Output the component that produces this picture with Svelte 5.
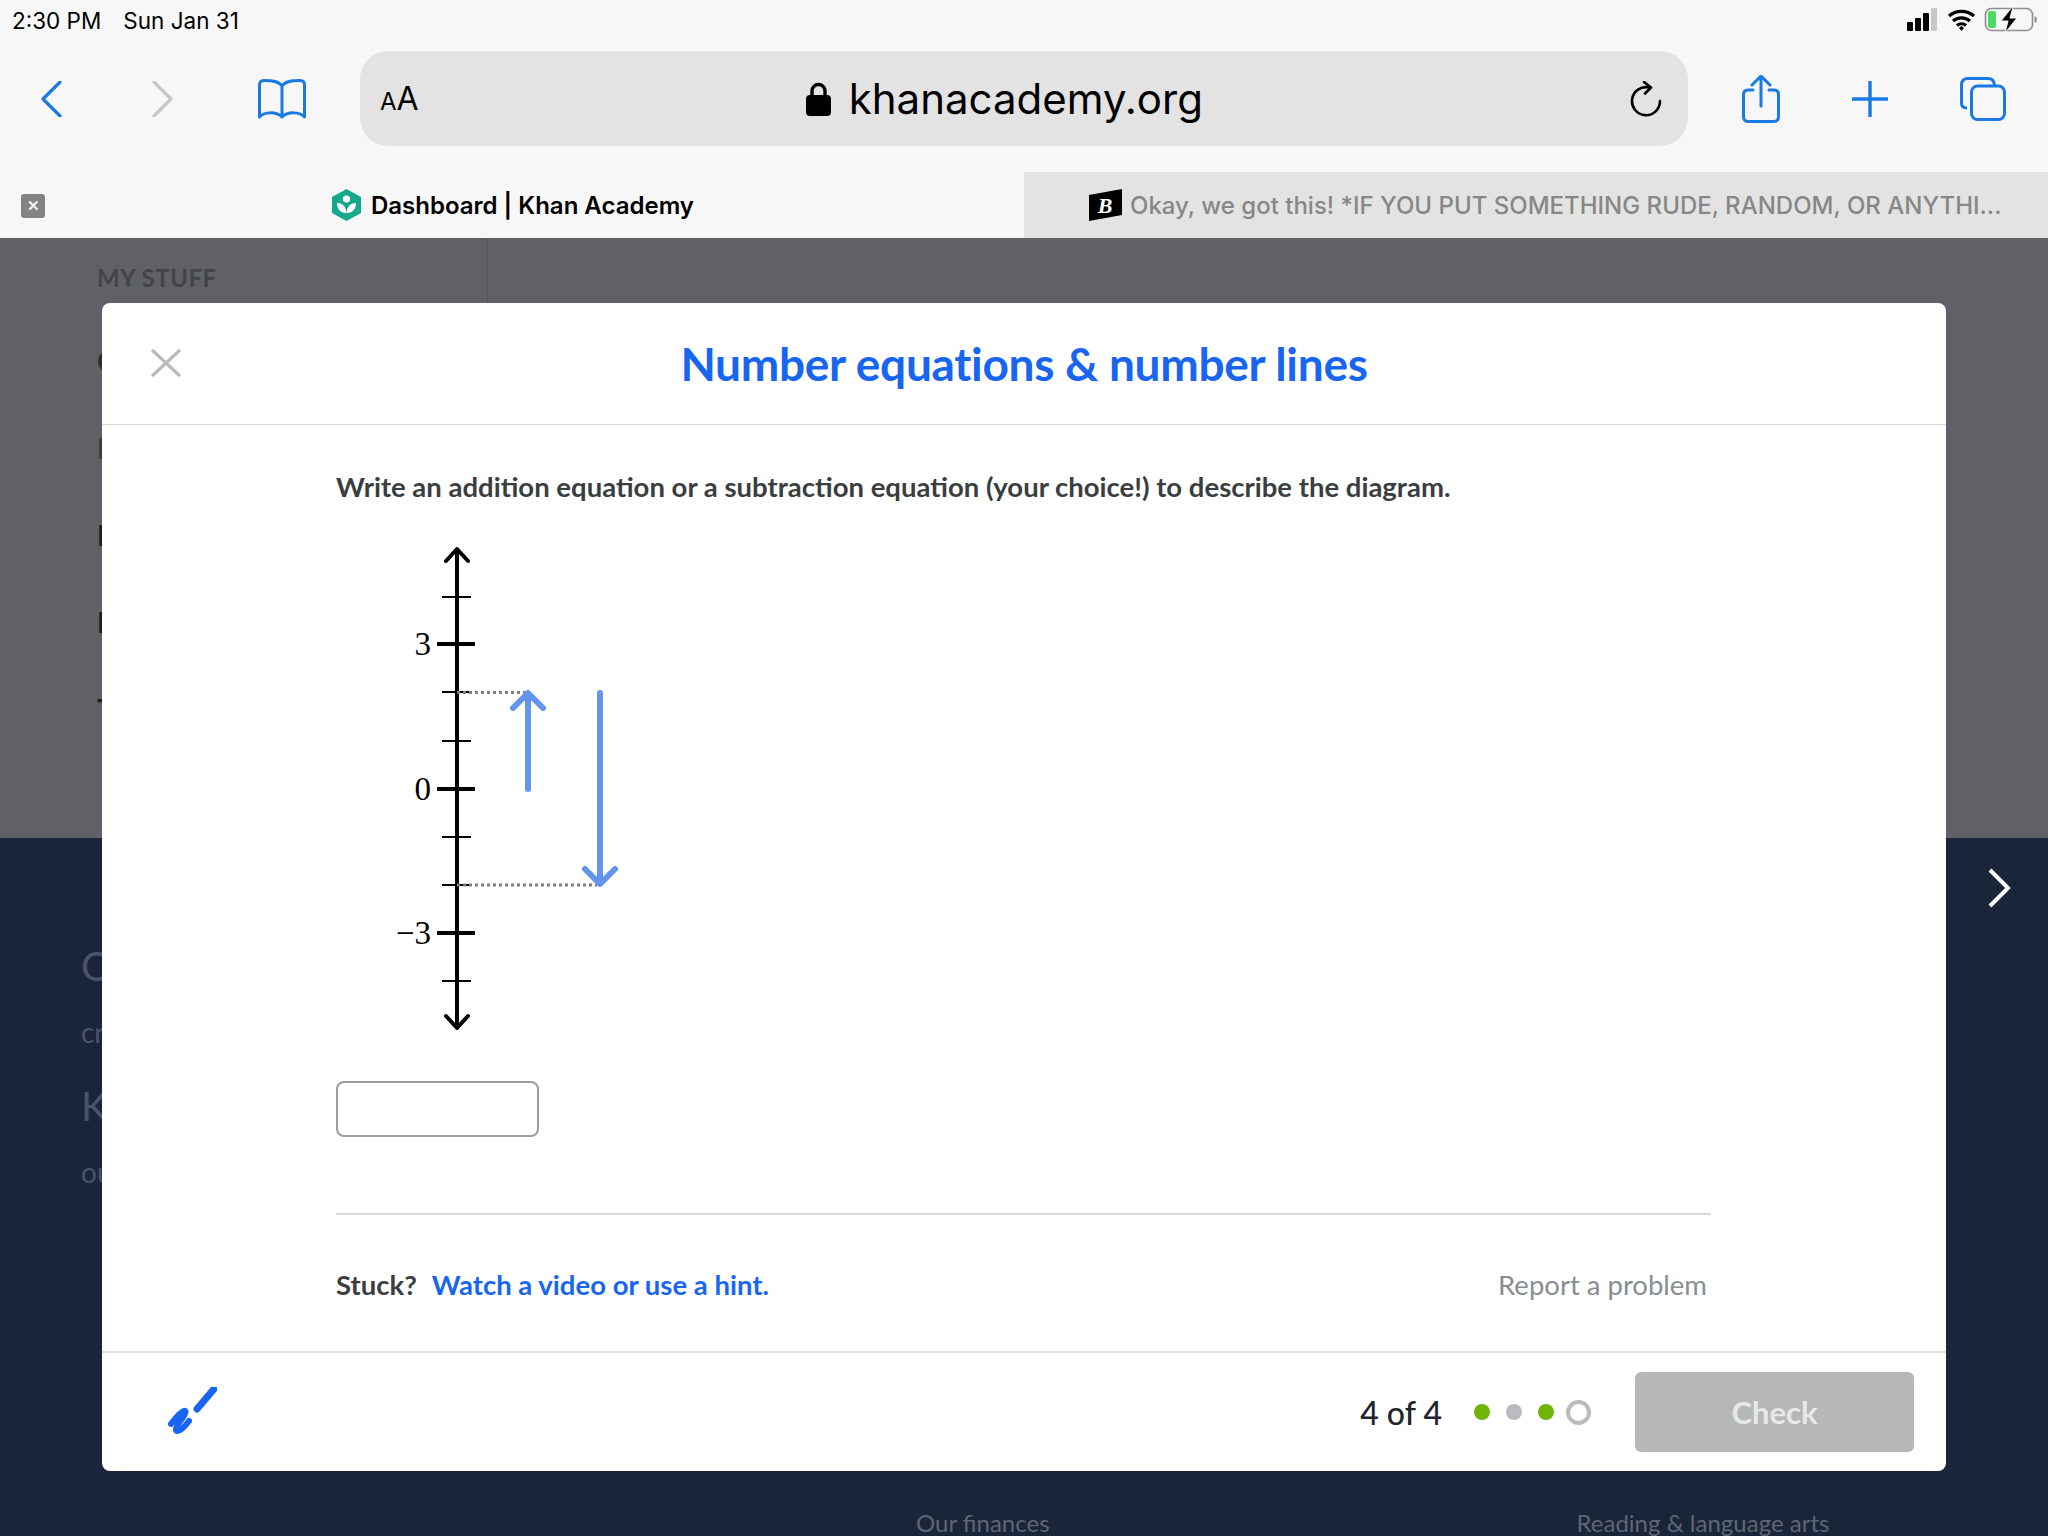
<script>
  const majorTicks = [
    { y: 644, label: "3" },
    { y: 789, label: "0" },
    { y: 933, label: "−3" }
  ];
  const minorTicks = [597, 692, 741, 837, 885, 981];
  const dots = ["done", "skipped", "done", "current"];
</script>

<div class="page">
  <header class="chrome">
    <div class="status">
      <span class="clock">2:30 PM</span>
      <span class="date">Sun Jan 31</span>
      <svg class="status-icons" width="132" height="26" viewBox="0 0 132 26">
        <rect x="0" y="15" width="6" height="9" rx="1" fill="#000" />
        <rect x="8" y="11" width="6" height="13" rx="1" fill="#000" />
        <rect x="16" y="6" width="6" height="18" rx="1" fill="#000" />
        <rect x="24" y="1" width="6" height="23" rx="1" fill="#c8c8c8" />
        <path d="M42 9a19 19 0 0 1 25 0M46 14a13 13 0 0 1 17 0M50 18.500a7 7 0 0 1 9 0" fill="none" stroke="#000" stroke-width="3.200" />
        <path d="M52 21l2.500-2 2.500 2-2.500 3z" fill="#000" />
        <rect x="78.500" y="1.500" width="47" height="22" rx="6" fill="none" stroke="#8e8e8e" stroke-width="1.600" />
        <rect x="81" y="4" width="8" height="17" rx="2.500" fill="#4cd964" />
        <path d="M127.500 9v7q2.500-1 2.500-3.500t-2.500-3.500z" fill="#8e8e8e" />
        <path d="M105 0l-11 14h7l-3 12 12-15h-7l3-11z" fill="#000" stroke="#f7f7f7" stroke-width="1" />
      </svg>
    </div>

    <div class="toolbar">
      <div class="nav-icons">
        <svg width="21" height="36" viewBox="0 0 21 36"><path d="M19 1L2 18l17 17" fill="none" stroke="#1a7ae4" stroke-width="3.200" stroke-linecap="round" stroke-linejoin="round" /></svg>
        <svg class="forward" width="21" height="36" viewBox="0 0 21 36"><path d="M2 1l17 17L2 35" fill="none" stroke="#c6c6c8" stroke-width="3.200" stroke-linecap="round" stroke-linejoin="round" /></svg>
        <svg class="book" width="48" height="40" viewBox="0 0 48 40"><path d="M24 7C21 2 14 1.500 6 1.500 3 1.500 1.500 3 1.500 6v32C6 33 18 32 24 38c6-6 18-5 22.500 0V6c0-3-1.500-4.500-4.500-4.500C34 1.500 27 2 24 7zM24 7v31" fill="none" stroke="#1a7ae4" stroke-width="3" stroke-linejoin="round" /></svg>
      </div>

      <div class="urlbar">
        <span class="aa"><small>A</small>A</span>
        <div class="address">
          <svg width="25" height="34" viewBox="0 0 25 34"><path d="M6 15V9a6.500 6.500 0 0 1 13 0v6" fill="none" stroke="#000" stroke-width="3.400" /><rect x="0" y="13" width="25" height="21" rx="4" fill="#000" /></svg>
          <span>khanacademy.org</span>
        </div>
        <svg width="32" height="36" viewBox="0 0 32 36"><path d="M19 6.500A14 14 0 1 0 30 20" fill="none" stroke="#000" stroke-width="2.600" stroke-linecap="round" /><path d="M14 1l7 5.500-6 6" fill="none" stroke="#000" stroke-width="2.600" stroke-linecap="round" stroke-linejoin="round" /></svg>
      </div>

      <div class="action-icons">
        <svg width="38" height="48" viewBox="0 0 38 48"><path d="M11 15H6q-4.500 0-4.500 4.500v22Q1.500 46.500 6 46.500h26q4.500 0 4.500-5v-22q0-4.500-4.500-4.500h-5M19 31V2M10 10l9-9 9 9" fill="none" stroke="#1a7ae4" stroke-width="3" stroke-linecap="round" stroke-linejoin="round" /></svg>
        <svg width="36" height="36" viewBox="0 0 36 36"><path d="M18 1v34M1 18h34" fill="none" stroke="#1a7ae4" stroke-width="3.400" stroke-linecap="round" /></svg>
        <svg width="46" height="44" viewBox="0 0 46 44"><path d="M7 31Q1.500 31 1.500 26V8q0-6.500 6.500-6.500h20q6 0 6.500 6.500" fill="none" stroke="#1a7ae4" stroke-width="3" /><rect x="11.500" y="9" width="33" height="33.500" rx="6" fill="none" stroke="#1a7ae4" stroke-width="3" /></svg>
      </div>
    </div>

    <div class="tabs">
      <div class="tab active">
        <span class="tab-close">✕</span>
        <svg width="29" height="32" viewBox="0 0 29 32">
          <path d="M14.500 0L29 8v16l-14.500 8L0 24V8z" fill="#14a98c" />
          <circle cx="14.500" cy="10" r="3.600" fill="#fff" />
          <path d="M5 14c5 0 9 3 9.500 10-5 0-9.500-3-9.500-10zM24 14c-5 0-9 3-9.500 10 5 0 9.500-3 9.500-10z" fill="#fff" />
        </svg>
        <span>Dashboard | Khan Academy</span>
      </div>
      <div class="tab inactive">
        <svg width="33" height="32" viewBox="0 0 33 32">
          <path d="M0 6L33 0v26L0 32z" fill="#000" />
          <text x="16" y="24" class="boldly-b">B</text>
        </svg>
        <span>Okay, we got this! *IF YOU PUT SOMETHING RUDE, RANDOM, OR ANYTHI...</span>
      </div>
    </div>
  </header>

  <section class="dimmed">
    <aside class="sidebar">
      <h4>MY STUFF</h4>
      <p>Courses</p>
      <p class="sub">Mastery</p>
      <p>Progress</p>
      <p>Profile</p>
      <p>Teachers</p>
    </aside>
    <svg class="next" width="24" height="40" viewBox="0 0 24 40"><path d="M3 2l18 18L3 38" fill="none" stroke="#fff" stroke-width="4" /></svg>
  </section>

  <footer class="navy">
    <div class="navy-intro">
      <p class="big">Our mission</p>
      <p class="small">create</p>
      <p class="big second">Khan</p>
      <p class="small">our</p>
    </div>
    <div class="navy-links">
      <span class="finances">Our finances</span>
      <span class="reading">Reading &amp; language arts</span>
    </div>
  </footer>

  <div class="modal">
    <div class="modal-head">
      <svg class="close" width="30" height="30" viewBox="0 0 30 30"><path d="M1 2l28 26M29 2L1 28" fill="none" stroke="#b9babc" stroke-width="3.200" /></svg>
      <h1>Number equations &amp; number lines</h1>
    </div>

    <div class="modal-body">
      <p class="question">Write an addition equation or a subtraction equation (your choice!) to describe the diagram.</p>

      <svg class="diagram" width="304" height="520" viewBox="336 530 304 520">
        {#each minorTicks as y}
          <line x1="442" x2="471" y1={y} y2={y} stroke="#000" stroke-width="2" />
        {/each}
        {#each majorTicks as t}
          <line x1="437" x2="475" y1={t.y} y2={t.y} stroke="#000" stroke-width="4" />
          <text x="431" y={t.y + 11} text-anchor="end" class="tick-label">{t.label}</text>
        {/each}
        <line x1="457" x2="457" y1="550" y2="1027" stroke="#000" stroke-width="4" />
        <path d="M446 561l11-12 11 12M446 1016l11 12 11-12" fill="none" stroke="#000" stroke-width="4" stroke-linecap="round" stroke-linejoin="round" />
        <line x1="457" x2="526" y1="692.500" y2="692.500" stroke="#808080" stroke-width="3" stroke-dasharray="3 3" />
        <line x1="457" x2="597" y1="885" y2="885" stroke="#808080" stroke-width="3" stroke-dasharray="3 3" />
        <path d="M528 789V694M513 708l15-15 15 15" fill="none" stroke="#6495ed" stroke-width="6" stroke-linejoin="round" stroke-linecap="round" />
        <path d="M600 693V882M585 869l15 15 15-15" fill="none" stroke="#6495ed" stroke-width="6" stroke-linejoin="round" stroke-linecap="round" />
      </svg>

      <input class="answer" type="text" aria-label="answer" />
      <hr />

      <div class="help">
        <span><b>Stuck?</b><a href="#hint">Watch a video or use a hint.</a></span>
        <span class="report">Report a problem</span>
      </div>
    </div>

    <div class="modal-foot">
      <svg class="scratch" width="50" height="50" viewBox="0 0 50 50">
        <path d="M4 37c4-5 9-12 13-13 3-1 1 4-2 8-4 5-8 11-5 12 3 1 9-6 12-10" fill="none" stroke="#1865f2" stroke-width="6" stroke-linecap="round" stroke-linejoin="round" />
        <path d="M30 22L47 2" fill="none" stroke="#1865f2" stroke-width="7" stroke-linecap="round" />
      </svg>
      <div class="progress">
        <span class="count">4 of 4</span>
        <div class="dots">
          {#each dots as d}
            <span class="dot {d}"></span>
          {/each}
        </div>
        <button class="check" disabled>Check</button>
      </div>
    </div>
  </div>
</div>

<style>
  :global(body) {
    margin: 0;
    background: #606166;
  }

  .page {
    position: relative;
    width: 2048px;
    height: 1536px;
    overflow: hidden;
    font-family: "Lato", "Liberation Sans", sans-serif;
  }

  /* SAFARI CHROME */
  .chrome {
    height: 238px;
    background: #f7f7f7;
    font-family: "Inter", "Liberation Sans", sans-serif;
    display: flex;
    flex-direction: column;
  }

  .status {
    height: 40px;
    padding: 0 9px 0 12px;
    display: flex;
    align-items: center;
    font-size: 22.500px;
    color: #000;
  }

  .date {
    margin-left: 22px;
  }

  .status-icons {
    margin-left: auto;
  }

  .toolbar {
    height: 132px;
    display: flex;
    align-items: center;
    padding-left: 41px;
    padding-bottom: 15px;
    box-sizing: border-box;
  }

  .nav-icons {
    display: flex;
    align-items: center;
    width: 319px;
  }

  .forward {
    margin-left: 90px;
    opacity: 1;
  }

  .book {
    margin-left: 85px;
  }

  .urlbar {
    width: 1328px;
    height: 95px;
    border-radius: 28px;
    background: #e3e3e4;
    display: flex;
    align-items: center;
    padding: 0 26px 0 20px;
    box-sizing: border-box;
    position: relative;
  }

  .aa {
    font-size: 32px;
    color: #000;
  }

  .aa small {
    font-size: 24px;
  }

  .address {
    flex: 1;
    display: flex;
    align-items: center;
    justify-content: center;
    gap: 18px;
    font-size: 42px;
    color: #000;
    padding-right: 40px;
  }

  .action-icons {
    display: flex;
    align-items: center;
    margin-left: 54px;
    gap: 72px;
  }

  .tabs {
    height: 66px;
    display: flex;
    font-size: 24px;
    font-weight: 600;
  }

  .tab {
    width: 1024px;
    display: flex;
    align-items: center;
    position: relative;
  }

  .active {
    color: #000;
    padding-left: 332px;
    box-sizing: border-box;
    gap: 10px;
  }

  .tab-close {
    position: absolute;
    left: 21px;
    top: 22px;
    width: 24px;
    height: 24px;
    background: #838383;
    border-radius: 3px;
    color: #f2f2f2;
    font-size: 15px;
    line-height: 24px;
    text-align: center;
  }

  .inactive {
    background: #e3e3e4;
    color: #878787;
    padding-left: 65px;
    box-sizing: border-box;
    gap: 8px;
    white-space: nowrap;
    font-size: 24px;
    font-weight: 500;
  }

  .boldly-b {
    fill: #fff;
    font-family: "Liberation Serif", serif;
    font-weight: 700;
    font-style: italic;
    font-size: 22px;
    text-anchor: middle;
  }

  /* DIMMED PAGE */
  .dimmed {
    height: 600px;
    background: #606166;
    position: relative;
    box-sizing: border-box;
  }

  .sidebar {
    width: 487px;
    height: 64px;
    box-sizing: content-box;
    padding: 0;
    border-right: 1px solid #54555a;
    position: relative;
  }

  .sidebar h4 {
    margin: 0;
    padding: 28px 0 0 97px;
    font-size: 24px;
    line-height: 24px;
    font-weight: 700;
    letter-spacing: 0.500px;
    color: #42444a;
  }

  .sidebar p {
    margin: 0;
    padding-left: 97px;
    font-size: 28px;
    line-height: 34px;
    height: 87px;
    color: #1c1d20;
    font-weight: 700;
  }

  .sidebar h4 + p {
    margin-top: 54px;
    color: #2c2d31;
  }

  .sidebar .sub {
    color: #3a3c42;
  }

  .next {
    position: absolute;
    left: 1987px;
    top: 630px;
    z-index: 1;
  }

  .navy {
    height: 698px;
    background: #1b2539;
    position: relative;
  }

  .navy-intro {
    padding: 104px 0 0 81px;
    color: #49536a;
  }

  .navy-intro p {
    margin: 0;
  }

  .navy-intro .big {
    font-size: 40px;
    line-height: 48px;
  }

  .navy-intro .small {
    font-size: 28px;
    line-height: 40px;
    margin-top: 22px;
  }

  .navy-intro .second {
    margin-top: 30px;
  }

  .navy-links {
    position: absolute;
    top: 670px;
    left: 916px;
    color: #5e6675;
    font-size: 24px;
    display: flex;
    gap: 527px;
  }

  /* MODAL */
  .modal {
    position: absolute;
    left: 102px;
    top: 303px;
    width: 1844px;
    height: 1168px;
    background: #fff;
    border-radius: 8px;
    display: flex;
    flex-direction: column;
    z-index: 2;
  }

  .modal-head {
    height: 121px;
    border-bottom: 1px solid #d6d8da;
    display: flex;
    align-items: center;
    justify-content: center;
    position: relative;
    box-sizing: content-box;
  }

  .close {
    position: absolute;
    left: 49px;
    top: 45px;
  }

  h1 {
    margin: 0;
    font-size: 46px;
    font-weight: 700;
    color: #1865f2;
    letter-spacing: -0.300px;
    padding-bottom: 0;
  }

  .modal-body {
    flex: 1;
    padding: 0 235px 0 234px;
    display: flex;
    flex-direction: column;
  }

  .question {
    margin: 44px 0 0;
    font-size: 27.500px;
    line-height: 36px;
    font-weight: 700;
    color: #3b3e40;
    white-space: nowrap;
  }

  .diagram {
    display: block;
    margin-top: 25px;
  }

  .answer {
    display: block;
    width: 203px;
    height: 56px;
    box-sizing: border-box;
    margin: 31px 0 0;
    border: 2px solid #9a9da0;
    border-radius: 8px;
    background: #fff;
    padding: 0;
    outline: none;
  }

  hr {
    width: 100%;
    margin: 76px 0 0;
    border: 0;
    border-top: 2px solid #d6d8da;
  }

  .help {
    display: flex;
    justify-content: space-between;
    align-items: center;
    margin-top: 52px;
    padding-right: 4px;
    font-size: 27.500px;
    line-height: 36px;
  }

  .help b {
    color: #3b3e40;
    font-weight: 700;
  }

  .help a {
    margin-left: 15px;
    color: #1865f2;
    font-weight: 700;
    text-decoration: none;
  }

  .report {
    color: #888d93;
  }

  .modal-foot {
    height: 118px;
    border-top: 2px solid #dcdddf;
    display: flex;
    align-items: center;
    justify-content: space-between;
    padding: 0 32px 0 65px;
  }

  .progress {
    display: flex;
    align-items: center;
  }

  .count {
    font-size: 32px;
    font-weight: 500;
    color: #21242c;
  }

  .dots {
    display: flex;
    align-items: center;
    gap: 16px;
    margin-left: 32px;
  }

  .dot {
    width: 16px;
    height: 16px;
    border-radius: 50%;
    box-sizing: border-box;
  }

  .done {
    background: #71b307;
  }

  .skipped {
    background: #b9bbbf;
  }

  .current {
    width: 25px;
    height: 25px;
    margin-left: -4px;
    border: 4px solid #b9bbbf;
    background: #fff;
  }

  .check {
    width: 279px;
    height: 80px;
    margin-left: 44px;
    border: 0;
    border-radius: 6px;
    background: #b6b7b9;
    color: #e7e8e8;
    font-family: inherit;
    font-size: 31px;
    font-weight: 700;
  }

  .tick-label {
    font-family: "Liberation Serif", serif;
    font-size: 33px;
    fill: #000;
  }
</style>
